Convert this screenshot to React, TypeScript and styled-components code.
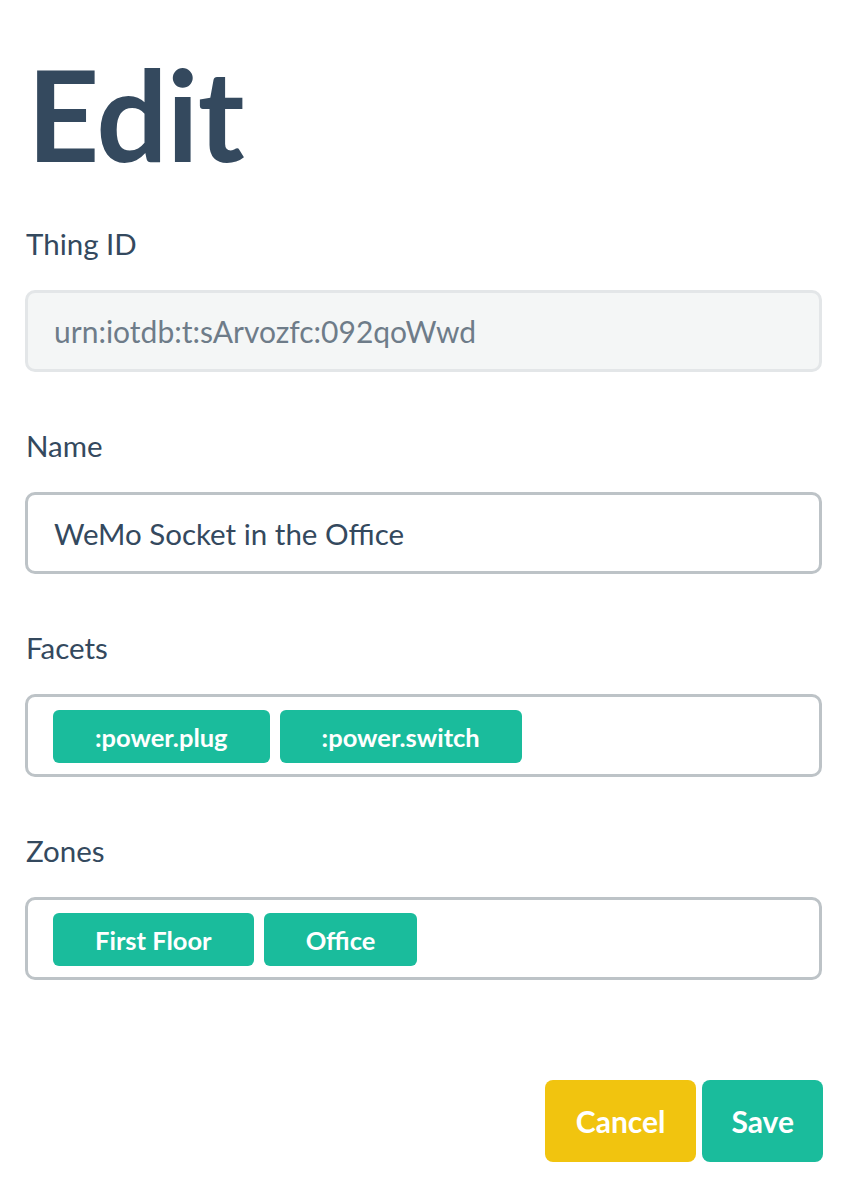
import React from "react";
import styled, { createGlobalStyle } from "styled-components";

const Global = createGlobalStyle`
  html, body { margin: 0; padding: 0; background: #ffffff; }
  body { font-family: Lato, "Open Sans", sans-serif; color: #34495e; }
`;

const Page = styled.div`
  padding: 0 25px 0 25px;
  width: 847px;
  box-sizing: border-box;
`;

const Title = styled.h1`
  margin: 0;
  padding-top: 44px;
  font-size: 126px;
  line-height: 140px;
  font-weight: 700;
  color: #34495e;
  letter-spacing: -1px;
  padding-left: 2px;
`;

const Field = styled.div<{ $first?: boolean }>`
  display: flex;
  flex-direction: column;
  margin-top: ${(p) => (p.$first ? "42px" : "56px")};
`;

const Label = styled.label`
  font-size: 29.5px;
  line-height: 36px;
  color: #34495e;
  margin-bottom: 28px;
  padding-left: 1px;
`;

const Input = styled.div<{ $disabled?: boolean }>`
  box-sizing: border-box;
  height: 82px;
  border: 3px solid ${(p) => (p.$disabled ? "#e3e6e8" : "#bdc3c7")};
  background: ${(p) => (p.$disabled ? "#f4f6f6" : "#ffffff")};
  border-radius: 10px;
  padding: 0 26px;
  display: flex;
  align-items: center;
  font-size: ${(p) => (p.$disabled ? "30px" : "29.5px")};
  color: ${(p) => (p.$disabled ? "#6e7c89" : "#34495e")};
`;

const TagBox = styled.div`
  box-sizing: border-box;
  height: 83px;
  border: 3px solid #bdc3c7;
  border-radius: 10px;
  padding: 13px 25px;
  display: flex;
  gap: 10px;
  align-items: flex-start;
`;

const Tag = styled.span`
  background: #1abc9c;
  color: #ffffff;
  font-weight: 700;
  font-size: 25.5px;
  height: 53px;
  display: flex;
  align-items: center;
  padding: 0 42px;
  border-radius: 6px;
`;

const Actions = styled.div`
  display: flex;
  justify-content: flex-end;
  gap: 6px;
  margin-top: 100px;
  margin-right: -1px;
`;

const Button = styled.button<{ $variant: "warning" | "primary" }>`
  border: none;
  height: 82px;
  padding: 0 ${(p) => (p.$variant === "warning" ? "31px" : "29px")};
  border-radius: 8px;
  font-family: Lato, sans-serif;
  font-weight: 700;
  font-size: 30px;
  color: #ffffff;
  background: ${(p) => (p.$variant === "warning" ? "#f1c40f" : "#1abc9c")};
  cursor: pointer;
`;

export default function App() {
  return (
    <>
      <Global />
      <Page>
        <Title>Edit</Title>
        <Field $first>
          <Label>Thing ID</Label>
          <Input $disabled>urn:iotdb:t:sArvozfc:092qoWwd</Input>
        </Field>
        <Field>
          <Label>Name</Label>
          <Input>WeMo Socket in the Office</Input>
        </Field>
        <Field>
          <Label>Facets</Label>
          <TagBox>
            <Tag>:power.plug</Tag>
            <Tag>:power.switch</Tag>
          </TagBox>
        </Field>
        <Field>
          <Label>Zones</Label>
          <TagBox>
            <Tag>First Floor</Tag>
            <Tag>Office</Tag>
          </TagBox>
        </Field>
        <Actions>
          <Button $variant="warning">Cancel</Button>
          <Button $variant="primary">Save</Button>
        </Actions>
      </Page>
    </>
  );
}
